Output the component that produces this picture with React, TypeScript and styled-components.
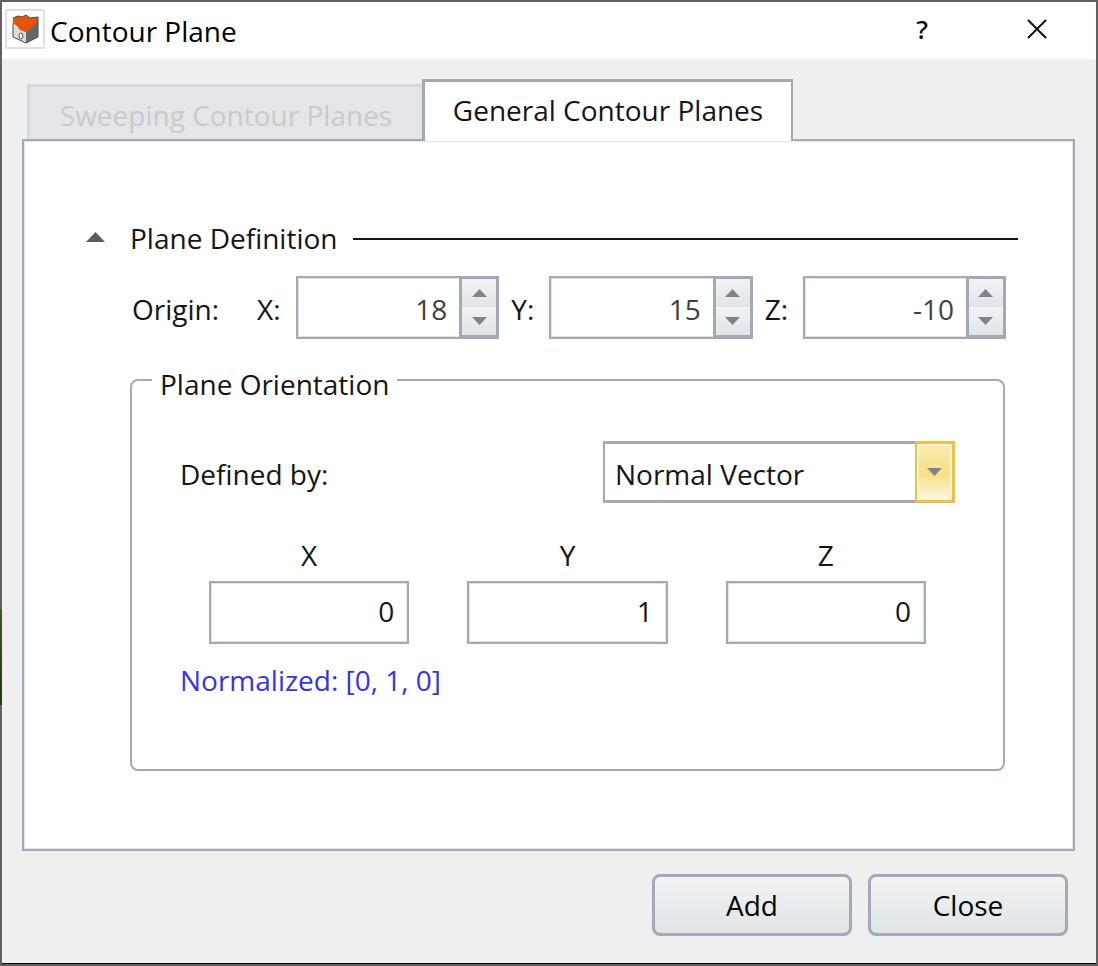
import React, { useState } from 'react';
import styled, { createGlobalStyle } from 'styled-components';

const edge = '#a4aab5';
const ink = '#151515';

const GlobalStyle = createGlobalStyle`
  *, *::before, *::after { box-sizing: border-box; }
  body { margin: 0; background: #636064; }
  body, button, input, select {
    font-family: "Open Sans", "Noto Sans", sans-serif;
    font-size: 28px;
    line-height: 40px;
    color: ${ink};
  }
`;

const Backdrop = styled.div`
  display: flex;
  min-height: 100vh;
  padding: 2px;
  background:
    linear-gradient(#646166 63%, #3f5a26 63%, #26331a 73%, #646166 73%) left / 2px 100% no-repeat,
    #636064;
`;

const Dialog = styled.main`
  display: flex;
  flex: 1;
  flex-direction: column;
  min-width: 0;
  background: #efefef;
  border-bottom: 1px solid #000;
`;

const TitleBar = styled.header`
  display: flex;
  align-items: center;
  height: 57px;
  padding: 0 37px 3px 3px;
  background: #fff;
`;

const AppIcon = styled.svg`
  width: 40px;
  height: 40px;
`;

const Title = styled.h1`
  flex: 1;
  margin: 0;
  padding: 4px 0 0 5px;
  color: #000;
  font-size: 28px;
  font-weight: 400;
`;

const CaptionButton = styled.button`
  display: grid;
  place-items: center;
  width: 44px;
  height: 44px;
  margin-left: 71px;
  padding: 0;
  border: 0;
  background: none;
  color: #000;
`;

const HelpGlyph = styled.span`
  font-family: "Noto Sans", sans-serif;
  font-size: 26px;
  font-weight: 500;
`;

const Content = styled.div`
  display: flex;
  flex: 1;
  flex-direction: column;
  padding: 20px 21px 0 20px;
`;

const TabList = styled.div`
  display: flex;
  align-items: flex-end;
  padding-left: 5px;
`;

const Tab = styled.button<{ $active?: boolean }>`
  position: relative;
  width: ${p => (p.$active ? 371 : 395)}px;
  height: ${p => (p.$active ? 62 : 55)}px;
  margin-bottom: ${p => (p.$active ? -2 : 0)}px;
  padding: ${p => (p.$active ? '0 0 4px' : '4px 0 0')};
  border: 3px solid ${p => (p.$active ? edge : '#d6d7db')};
  border-bottom: 0;
  border-right-width: ${p => (p.$active ? 2 : 0)}px;
  background: ${p => (p.$active ? '#fff' : '#e4e5e9')};
  color: ${p => (p.$active ? ink : '#c9cacc')};
  white-space: nowrap;
`;

const Panel = styled.section`
  flex: 1;
  padding: 77px 55px 77px 62px;
  border: 2px solid ${edge};
  background: #fff;
  box-shadow: inset 0 0 0 1px #e3e6e8;
`;

const SectionHeader = styled.div`
  display: flex;
  align-items: center;

  &::after {
    content: '';
    flex: 1;
    height: 2px;
    margin: 2px 0 0 16px;
    background: ${ink};
  }
`;

const CollapseButton = styled.button`
  display: flex;
  align-items: center;
  gap: 25px;
  padding: 0;
  border: 0;
  background: none;

  svg { margin-bottom: 2px; }
`;

const OriginRow = styled.div`
  display: flex;
  align-items: center;
  margin: 18px 12px 0 46px;
`;

const OriginTitle = styled.span`
  width: 125px;
  padding-top: 2px;
`;

const AxisLabel = styled.label`
  width: 39px;
  padding-top: 2px;
`;

const SpinBox = styled.div`
  display: flex;
  flex: 1;
  min-width: 0;
  height: 63px;
  border: 2px solid ${edge};
  box-shadow: inset 0 0 0 1px #e0e4e7;

  & + ${AxisLabel} {
    width: 50px;
    padding-left: 12px;
  }
`;

const SpinInput = styled.input`
  flex: 1;
  width: 0;
  min-width: 0;
  padding: 3px 12px 0 8px;
  border: 0;
  outline: 0;
  background: none;
  color: #3f3f41;
  text-align: right;
`;

const SpinButtons = styled.div`
  display: grid;
  grid-template-rows: 1fr 1fr;
  width: 38px;
  border: 1px solid ${edge};
  border-left-width: 3px;
  border-bottom-width: 2px;
`;

const SpinButton = styled.button`
  display: grid;
  place-items: center;
  min-height: 0;
  padding: 0;
  border: 0;
  background: linear-gradient(#f1f2f4, #e1e4e6);
`;

const Group = styled.fieldset`
  min-width: 0;
  margin: 17px 13px 0 44px;
  padding: 37px 48px 69px;
  border: 2px solid ${edge};
  border-radius: 8px;
`;

const Legend = styled.legend`
  margin-left: -28px;
  padding: 8px 8px 0;
`;

const DefinedRow = styled.div`
  display: flex;
  align-items: center;
  justify-content: space-between;
`;

const DefinedLabel = styled.label`
  padding-top: 3px;
`;

const SelectBox = styled.div`
  position: relative;
  width: 352px;
  height: 62px;
`;

const Select = styled.select`
  width: 100%;
  height: 100%;
  padding: 3px 48px 0 10px;
  border: 2px solid ${edge};
  border-top-width: 3px;
  border-bottom-width: 3px;
  border-radius: 0;
  outline: 0;
  background: #fff;
  appearance: none;
`;

const SelectArrow = styled.span`
  position: absolute;
  top: 0;
  right: 0;
  bottom: 0;
  display: grid;
  place-items: center;
  width: 40px;
  border: 3px solid #ecc246;
  border-left-width: 2px;
  background: linear-gradient(#f9eab4, #f7e084 55%, #fdf8e4);
  box-shadow: inset 0 0 0 2px #fdf5da;
  pointer-events: none;
`;

const VectorGrid = styled.div`
  display: grid;
  grid-template-columns: repeat(3, 1fr);
  gap: 58px;
  margin: 32px 29px 0;
`;

const VectorField = styled.label`
  display: flex;
  flex-direction: column;
  gap: 6px;
  min-width: 0;
  text-align: center;
`;

const VectorInput = styled.input`
  width: 100%;
  height: 63px;
  padding: 0 13px 4px;
  border: 2px solid ${edge};
  outline: 0;
  background: #fff;
  box-shadow: inset 0 0 0 1px #e0e4e7;
  text-align: right;
`;

const Normalized = styled.output`
  display: block;
  margin-top: 16px;
  color: #3431f5;
`;

const Footer = styled.footer`
  display: flex;
  justify-content: flex-end;
  gap: 16px;
  padding: 23px 28px 27px;
`;

const PushButton = styled.button`
  width: 200px;
  height: 62px;
  padding: 0;
  border: 3px solid ${edge};
  border-radius: 8px;
  background: linear-gradient(#f2f3f5, #e0e4e6);
  color: #000;
`;

function Triangle({ up, wide }: { up?: boolean; wide?: boolean }) {
  return (
    <svg width={wide ? 19 : 15} height={wide ? 10 : 8} viewBox="0 0 15 8" preserveAspectRatio="none" aria-hidden="true">
      <path d={up ? 'M0 8L7.5 0L15 8Z' : 'M0 0L7.5 8L15 0Z'} fill={wide ? '#5b5f62' : '#82828f'} />
    </svg>
  );
}

function SpinField({ axis, initial }: { axis: string; initial: number }) {
  const [value, setValue] = useState(String(initial));
  const step = (by: number) => setValue(String((Number(value) || 0) + by));
  const id = `origin-${axis}`;
  return (
    <>
      <AxisLabel htmlFor={id}>{axis}:</AxisLabel>
      <SpinBox>
        <SpinInput id={id} value={value} onChange={e => setValue(e.target.value)} />
        <SpinButtons>
          <SpinButton type="button" aria-label={`Increase ${axis}`} onClick={() => step(1)}><Triangle up /></SpinButton>
          <SpinButton type="button" aria-label={`Decrease ${axis}`} onClick={() => step(-1)}><Triangle /></SpinButton>
        </SpinButtons>
      </SpinBox>
    </>
  );
}

export default function App() {
  const [vector, setVector] = useState(['0', '1', '0']);
  const [open, setOpen] = useState(true);
  const numbers = vector.map(v => Number(v) || 0);
  const length = Math.hypot(...numbers) || 1;
  const unit = numbers.map(n => Number((n / length).toFixed(3))).join(', ');

  return (
    <Backdrop>
      <GlobalStyle />
      <Dialog>
        <TitleBar>
          <AppIcon viewBox="0 0 40 40" aria-hidden="true">
            <rect x="1" y="1" width="38" height="38" rx="1" fill="#fff" stroke="#e0e0e0" strokeWidth="2" />
            <path d="M8 9L21 16V34L8 28Z" fill="#dcdcdc" />
            <path d="M21 14L33 9V28L21 34Z" fill="#686868" />
            <path d="M8 9L13 7L17 8L21 6L25 9L33 8L31 14L28 17L25 21L20 23L15 21L12 17L8 14Z" fill="#e65305" />
            <path d="M8 14V28L21 34L33 28V8L25 9L21 6L17 8L13 7L8 9" fill="none" stroke="#4a4a4a" strokeWidth="1" />
            <ellipse cx="16" cy="27" rx="2" ry="3" fill="#fff" stroke="#555" strokeWidth="1" />
          </AppIcon>
          <Title>Contour Plane</Title>
          <CaptionButton type="button" aria-label="Help"><HelpGlyph>?</HelpGlyph></CaptionButton>
          <CaptionButton type="button" aria-label="Close window">
            <svg width="20" height="20" viewBox="0 0 20 20" aria-hidden="true">
              <path d="M1 1L19 19M19 1L1 19" stroke="#111" strokeWidth="2" />
            </svg>
          </CaptionButton>
        </TitleBar>

        <Content>
          <TabList role="tablist">
            <Tab type="button" role="tab" aria-selected={false} disabled>Sweeping Contour Planes</Tab>
            <Tab type="button" role="tab" aria-selected $active>General Contour Planes</Tab>
          </TabList>
          <Panel role="tabpanel">
            <SectionHeader>
              <CollapseButton type="button" aria-expanded={open} onClick={() => setOpen(!open)}>
                <Triangle up={open} wide />
                Plane Definition
              </CollapseButton>
            </SectionHeader>
            {open && (
              <>
                <OriginRow>
                  <OriginTitle>Origin:</OriginTitle>
                  <SpinField axis="X" initial={18} />
                  <SpinField axis="Y" initial={15} />
                  <SpinField axis="Z" initial={-10} />
                </OriginRow>
                <Group>
                  <Legend>Plane Orientation</Legend>
                  <DefinedRow>
                    <DefinedLabel htmlFor="defined-by">Defined by:</DefinedLabel>
                    <SelectBox>
                      <Select id="defined-by" defaultValue="normal">
                        <option value="normal">Normal Vector</option>
                      </Select>
                      <SelectArrow><Triangle /></SelectArrow>
                    </SelectBox>
                  </DefinedRow>
                  <VectorGrid>
                    {['X', 'Y', 'Z'].map((axis, i) => (
                      <VectorField key={axis}>
                        {axis}
                        <VectorInput
                          value={vector[i]}
                          onChange={e => setVector(vector.map((v, j) => (j === i ? e.target.value : v)))}
                        />
                      </VectorField>
                    ))}
                  </VectorGrid>
                  <Normalized>Normalized: [{unit}]</Normalized>
                </Group>
              </>
            )}
          </Panel>
        </Content>

        <Footer>
          <PushButton type="button">Add</PushButton>
          <PushButton type="button">Close</PushButton>
        </Footer>
      </Dialog>
    </Backdrop>
  );
}
